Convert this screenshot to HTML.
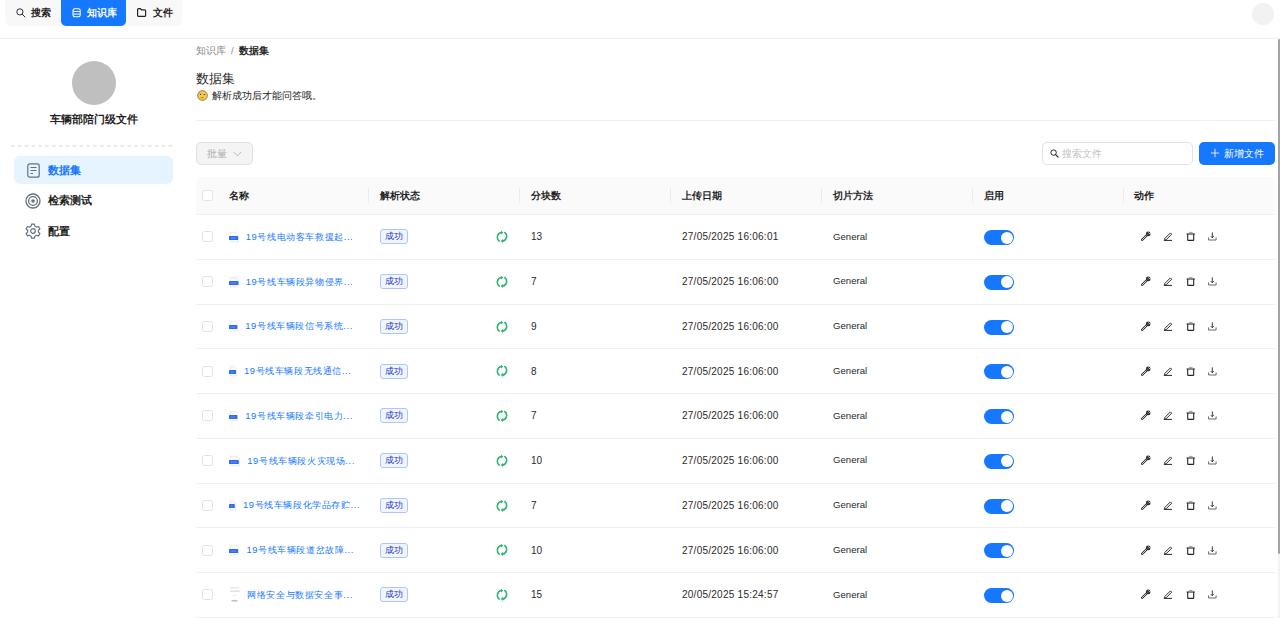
<!DOCTYPE html>
<html><head><meta charset="utf-8">
<style>
*{box-sizing:border-box;margin:0;padding:0}
html,body{width:1280px;height:618px;overflow:hidden;background:#fff;font-family:"Liberation Sans",sans-serif;color:#1f1f1f}
.abs{position:absolute}
.nav{left:5px;top:-6px;width:177px;height:32px;background:#f8f8f8;border-radius:6px}
.tab{top:-6px;height:32px;border-radius:5px;font-size:10px;font-weight:bold;line-height:12px}
.topline{left:0;top:38px;width:1280px;height:1px;background:#efefef}
.avatar-tr{left:1252px;top:3px;width:22px;height:22px;border-radius:50%;background:#f1f2f4}
.sb-avatar{left:72px;top:61px;width:44px;height:44px;border-radius:50%;background:#bfbfbf}
.sb-title{left:0;top:112px;width:187px;text-align:center;font-size:11px;font-weight:bold;line-height:14px}
.dash{left:11px;top:145px;width:162px;height:0;border-top:1px dashed #dcdcdc}
.menu-act{left:14px;top:156px;width:159px;height:28px;border-radius:6px;background:#e6f4ff}
.mi{left:48px;font-size:11px;font-weight:bold;line-height:14px}
.crumb{left:196px;top:45px;font-size:9.5px;line-height:12px}
.h1{left:196px;top:71.5px;font-size:12.5px;line-height:15px;color:#262626}
.sub{left:196px;top:89px;font-size:9.5px;line-height:12px;color:#262626}
.hline{left:196px;top:120px;width:1079px;height:1px;background:#f0f0f0}
.btn-batch{left:196px;top:142px;width:57px;height:23px;border:1px solid #e0e0e0;background:#f4f4f4;border-radius:5px;color:#adadad;font-size:9.5px;line-height:21px;padding-left:10px}
.search{left:1042px;top:142px;width:151px;height:23px;border:1px solid #e2e2e2;border-radius:5px;font-size:9.5px;line-height:21px;color:#bfbfbf;padding-left:19px}
.btn-add{left:1199px;top:142px;width:76px;height:23px;background:#1677ff;border-radius:5px;color:#fff;font-size:9.5px;line-height:23px;padding-left:25px}
.thead{left:196px;top:177px;width:1079px;height:38px;background:#fafafa;border-radius:6px 6px 0 0;border-bottom:1px solid #f0f0f0}
.th{top:189px;font-size:9.5px;font-weight:bold;line-height:13px}
.sep{top:188px;width:1px;height:15px;background:#ebebeb}
.row{left:196px;width:1079px;height:1px;background:#f0f0f0}
.cb{left:202px;width:11px;height:11px;border:1px solid #e2e2e2;border-radius:2.5px;background:#fff}
.name{left:245px;font-size:9.4px;letter-spacing:0.6px;line-height:12px;color:#1677ff}
.tag{left:380px;width:28px;height:15px;border:1px solid #adc6ff;background:#f0f5ff;border-radius:3px;color:#1d39c4;font-size:9px;line-height:13px;text-align:center}
.td{font-size:10px;line-height:12px;color:#2a2a2a}
.tg{left:984px;width:30px;height:15px;border-radius:8px;background:#1677ff}
.tg::after{content:"";position:absolute;right:1.5px;top:1.5px;width:12px;height:12px;border-radius:50%;background:#fff}
.scroll{left:1278px;top:39px;width:2px;height:515px;background:#a3a3a3;border-radius:1px}
.scrolltrack{left:1278px;top:39px;width:2px;height:579px;background:#f3f3f3}
</style></head>
<body>
<div class="abs nav"></div>
<div class="abs tab" style="left:61px;width:65px;background:#1677ff"></div>
<!-- nav items -->
<svg class="abs" style="left:16px;top:7.8px" width="10" height="10" viewBox="0 0 10 10"><circle cx="3.9" cy="3.9" r="3.1" fill="none" stroke="#262626" stroke-width="0.95"/><path d="M6.2 6.2L8.9 8.9" stroke="#262626" stroke-width="1" stroke-linecap="round"/></svg>
<div class="abs" style="left:31px;top:7px;font-size:9.5px;font-weight:bold;line-height:12px">搜索</div>
<svg class="abs" style="left:71.5px;top:7.5px" width="10" height="10" viewBox="0 0 10 10"><rect x="1" y="0.8" width="7.2" height="8" rx="1.8" fill="none" stroke="#fff" stroke-width="1.05"/><path d="M1 3.5H8.2M1 6.1H8.2" stroke="#fff" stroke-width="1"/></svg>
<div class="abs" style="left:87px;top:7px;font-size:9.5px;font-weight:bold;line-height:12px;color:#fff">知识库</div>
<svg class="abs" style="left:137px;top:7.5px" width="10" height="10" viewBox="0 0 10 10"><path d="M0.6 1.6Q0.6 0.6 1.6 0.6H3.4L4.4 1.8H7.6Q8.6 1.8 8.6 2.8V7.4Q8.6 8.4 7.6 8.4H1.6Q0.6 8.4 0.6 7.4Z" fill="none" stroke="#1f1f1f" stroke-width="1.15"/></svg>
<div class="abs" style="left:152.5px;top:7px;font-size:9.5px;font-weight:bold;line-height:12px">文件</div>
<div class="abs avatar-tr"></div>
<div class="abs topline"></div>

<!-- sidebar -->
<div class="abs sb-avatar"></div>
<div class="abs sb-title">车辆部陪门级文件</div>
<svg class="abs" style="left:11px;top:144px" width="163" height="4" viewBox="0 0 163 4"><line x1="0" y1="1.9" x2="163" y2="1.9" stroke="#dedede" stroke-width="1.3" stroke-dasharray="3.6 3.25"/></svg>
<div class="abs menu-act"></div>
<svg class="abs" style="left:26.7px;top:162.8px" width="13" height="15" viewBox="0 0 13 15"><rect x="0.8" y="0.8" width="11.4" height="13.4" rx="2" fill="none" stroke="#667085" stroke-width="1.2"/><path d="M3.5 4.5H9.5M3.5 7.5H9.5M3.5 10.5H6" stroke="#667085" stroke-width="1.2"/></svg>
<div class="abs mi" style="top:163px;color:#1677ff">数据集</div>
<svg class="abs" style="left:25px;top:193px" width="16" height="16" viewBox="0 0 16 16"><circle cx="8" cy="8" r="7" fill="none" stroke="#667085" stroke-width="1.3"/><circle cx="8" cy="8" r="4.4" fill="none" stroke="#667085" stroke-width="1.3"/><circle cx="8" cy="8" r="1.8" fill="#667085"/></svg>
<div class="abs mi" style="top:193px">检索测试</div>
<svg class="abs" style="left:25px;top:223px" width="16" height="16" viewBox="0 0 16 16"><path d="M6.6 1.2h2.8l.5 2 1.6.9 2-.6 1.4 2.4-1.5 1.4v1.8l1.5 1.4-1.4 2.4-2-.6-1.6.9-.5 2H6.6l-.5-2-1.6-.9-2 .6L1.1 10.5l1.5-1.4V7.3L1.1 5.9l1.4-2.4 2 .6 1.6-.9z" fill="none" stroke="#667085" stroke-width="1.2" stroke-linejoin="round"/><circle cx="8" cy="8" r="2.3" fill="none" stroke="#667085" stroke-width="1.2"/></svg>
<div class="abs mi" style="top:224px">配置</div>

<!-- main header -->
<div class="abs crumb"><span style="color:#8c8c8c">知识库</span><span style="color:#8c8c8c;margin:0 5px">/</span><span style="font-weight:bold;color:#262626">数据集</span></div>
<div class="abs h1">数据集</div>
<svg class="abs" style="left:197px;top:90px" width="11" height="11" viewBox="0 0 11 11"><circle cx="5.5" cy="5.5" r="4.9" fill="#f7c945" stroke="#5a4a2a" stroke-width="0.6"/><rect x="2.8" y="3.8" width="1.4" height="1.2" fill="#5a4020"/><rect x="6.6" y="4" width="1.6" height="0.9" fill="#5a4020"/><path d="M3.6 7.6H7" stroke="#a0782a" stroke-width="0.7"/></svg>
<div class="abs sub" style="left:212px;top:90px">解析成功后才能问答哦。</div>
<div class="abs hline"></div>

<div class="abs btn-batch">批量</div>
<svg class="abs" style="left:232.5px;top:150.5px" width="9" height="6" viewBox="0 0 9 6"><path d="M0.5 0.8L4.4 4.8L8.3 0.8" fill="none" stroke="#b0b0b0" stroke-width="0.9"/></svg>
<div class="abs search">搜索文件</div>
<svg class="abs" style="left:1050px;top:149px" width="9" height="9" viewBox="0 0 10 10"><circle cx="4" cy="4" r="3" fill="none" stroke="#262626" stroke-width="1.1"/><path d="M6.2 6.2L9 9" stroke="#262626" stroke-width="1.3" stroke-linecap="round"/></svg>
<div class="abs btn-add">新增文件</div>
<svg class="abs" style="left:1210px;top:148px" width="10" height="10" viewBox="0 0 10 10"><path d="M5 0.8V9.2M0.8 5H9.2" stroke="#fff" stroke-width="0.85"/></svg>

<!-- table header -->
<div class="abs thead"></div>
<div class="abs cb" style="top:190px"></div>
<div class="abs th" style="left:229px">名称</div>
<div class="abs sep" style="left:368px"></div>
<div class="abs th" style="left:380px">解析状态</div>
<div class="abs sep" style="left:519px"></div>
<div class="abs th" style="left:531px">分块数</div>
<div class="abs sep" style="left:670px"></div>
<div class="abs th" style="left:682px">上传日期</div>
<div class="abs sep" style="left:821px"></div>
<div class="abs th" style="left:833px">切片方法</div>
<div class="abs sep" style="left:972px"></div>
<div class="abs th" style="left:984px">启用</div>
<div class="abs sep" style="left:1123px"></div>
<div class="abs th" style="left:1134px">动作</div>

<!--ROWS-->
<div class="abs row" style="top:258.85px"></div>
<div class="abs cb" style="top:231.47px"></div>
<svg class="abs" style="left:229px;top:231.97px" width="10.0" height="11" viewBox="0 0 10.0 11"><path d="M1.3 0.4H7.6L9.7 2.5V9.9H1.3Z" fill="#fbfbfb" stroke="#dedede" stroke-width="0.6"/><rect x="0" y="4" width="9.1" height="4.1" rx="0.7" fill="#2d6cf0"/><path d="M1.5 6.1H7.0" stroke="#9db8f5" stroke-width="0.5"/></svg>
<div class="abs name" style="left:245.7px;top:230.97px">19号线电动客车救援起...</div>
<div class="abs tag" style="top:229.38px">成功</div>
<svg class="abs" style="left:496px;top:230.07px" width="12" height="13.6" viewBox="0 0 12 13" preserveAspectRatio="none"><path d="M3.2 10.6A4.6 4.6 0 0 1 5.2 2.4" fill="none" stroke="#2bb673" stroke-width="1.6" stroke-linecap="round"/><path d="M5 0.6L7.3 2.5L5 4.4Z" fill="#2bb673"/><path d="M8.8 2.4A4.6 4.6 0 0 1 6.8 10.6" fill="none" stroke="#2bb673" stroke-width="1.6" stroke-linecap="round"/><path d="M7 8.6L4.7 10.5L7 12.4Z" fill="#2bb673"/></svg>
<div class="abs td" style="left:531px;top:231.38px">13</div>
<div class="abs td" style="left:682px;top:231.38px;letter-spacing:0.25px">27/05/2025 16:06:01</div>
<div class="abs td" style="left:833px;top:230.67px;font-size:9.6px">General</div>
<div class="abs tg" style="top:230.07px"></div>
<svg class="abs" style="left:1141.0px;top:231.47px" width="10" height="10" viewBox="0 0 10 10"><path d="M1.2 8.8L5.8 4.2" stroke="#262626" stroke-width="2.3" stroke-linecap="round"/><path d="M1.3 8.7L5.6 4.4" stroke="#fff" stroke-width="0.8" stroke-linecap="round"/><circle cx="7.2" cy="2.9" r="2.3" fill="#262626"/><path d="M7.4 1.4L8.9 2.9" stroke="#fff" stroke-width="0.8"/><circle cx="7" cy="3.1" r="0.6" fill="#bbb"/></svg>
<svg class="abs" style="left:1163.0px;top:231.47px" width="10" height="10" viewBox="0 0 10 10"><path d="M1.7 7.6L7.4 1.9L8.7 3.2L3 8.9H1.7Z" fill="none" stroke="#262626" stroke-width="0.95" stroke-linejoin="round"/><path d="M0.8 9.4H9" stroke="#262626" stroke-width="1"/></svg>
<svg class="abs" style="left:1185.5px;top:231.47px" width="10" height="10" viewBox="0 0 10 10"><path d="M0.6 3H8.8" stroke="#262626" stroke-width="1.1"/><path d="M3.2 2.7V1.4H6.2V2.7" fill="none" stroke="#9a9a9a" stroke-width="0.9"/><path d="M1.7 3.1V8.9Q1.7 9.4 2.2 9.4H7.2Q7.7 9.4 7.7 8.9V3.1" fill="none" stroke="#262626" stroke-width="1.1"/></svg>
<svg class="abs" style="left:1207.5px;top:231.47px" width="10" height="10" viewBox="0 0 10 10"><path d="M4.3 1.4V6.6" stroke="#262626" stroke-width="0.9"/><path d="M2.8 5.2L4.3 6.7L5.8 5.2" fill="none" stroke="#262626" stroke-width="0.9"/><path d="M0.6 6.4V9H8.1V6.4" fill="none" stroke="#5a5a5a" stroke-width="0.9"/></svg>
<div class="abs row" style="top:303.60px"></div>
<div class="abs cb" style="top:276.23px"></div>
<svg class="abs" style="left:229px;top:276.73px" width="10.4" height="11" viewBox="0 0 10.4 11"><path d="M1.3 0.4H8.0L10.1 2.5V9.9H1.3Z" fill="#fbfbfb" stroke="#dedede" stroke-width="0.6"/><rect x="0" y="4" width="9.5" height="4.1" rx="0.7" fill="#2d6cf0"/><path d="M1.5 6.1H7.4" stroke="#9db8f5" stroke-width="0.5"/></svg>
<div class="abs name" style="left:245.7px;top:275.73px">19号线车辆段异物侵界...</div>
<div class="abs tag" style="top:274.12px">成功</div>
<svg class="abs" style="left:496px;top:274.83px" width="12" height="13.6" viewBox="0 0 12 13" preserveAspectRatio="none"><path d="M3.2 10.6A4.6 4.6 0 0 1 5.2 2.4" fill="none" stroke="#2bb673" stroke-width="1.6" stroke-linecap="round"/><path d="M5 0.6L7.3 2.5L5 4.4Z" fill="#2bb673"/><path d="M8.8 2.4A4.6 4.6 0 0 1 6.8 10.6" fill="none" stroke="#2bb673" stroke-width="1.6" stroke-linecap="round"/><path d="M7 8.6L4.7 10.5L7 12.4Z" fill="#2bb673"/></svg>
<div class="abs td" style="left:531px;top:276.12px">7</div>
<div class="abs td" style="left:682px;top:276.12px;letter-spacing:0.25px">27/05/2025 16:06:00</div>
<div class="abs td" style="left:833px;top:275.43px;font-size:9.6px">General</div>
<div class="abs tg" style="top:274.83px"></div>
<svg class="abs" style="left:1141.0px;top:276.23px" width="10" height="10" viewBox="0 0 10 10"><path d="M1.2 8.8L5.8 4.2" stroke="#262626" stroke-width="2.3" stroke-linecap="round"/><path d="M1.3 8.7L5.6 4.4" stroke="#fff" stroke-width="0.8" stroke-linecap="round"/><circle cx="7.2" cy="2.9" r="2.3" fill="#262626"/><path d="M7.4 1.4L8.9 2.9" stroke="#fff" stroke-width="0.8"/><circle cx="7" cy="3.1" r="0.6" fill="#bbb"/></svg>
<svg class="abs" style="left:1163.0px;top:276.23px" width="10" height="10" viewBox="0 0 10 10"><path d="M1.7 7.6L7.4 1.9L8.7 3.2L3 8.9H1.7Z" fill="none" stroke="#262626" stroke-width="0.95" stroke-linejoin="round"/><path d="M0.8 9.4H9" stroke="#262626" stroke-width="1"/></svg>
<svg class="abs" style="left:1185.5px;top:276.23px" width="10" height="10" viewBox="0 0 10 10"><path d="M0.6 3H8.8" stroke="#262626" stroke-width="1.1"/><path d="M3.2 2.7V1.4H6.2V2.7" fill="none" stroke="#9a9a9a" stroke-width="0.9"/><path d="M1.7 3.1V8.9Q1.7 9.4 2.2 9.4H7.2Q7.7 9.4 7.7 8.9V3.1" fill="none" stroke="#262626" stroke-width="1.1"/></svg>
<svg class="abs" style="left:1207.5px;top:276.23px" width="10" height="10" viewBox="0 0 10 10"><path d="M4.3 1.4V6.6" stroke="#262626" stroke-width="0.9"/><path d="M2.8 5.2L4.3 6.7L5.8 5.2" fill="none" stroke="#262626" stroke-width="0.9"/><path d="M0.6 6.4V9H8.1V6.4" fill="none" stroke="#5a5a5a" stroke-width="0.9"/></svg>
<div class="abs row" style="top:348.35px"></div>
<div class="abs cb" style="top:320.98px"></div>
<svg class="abs" style="left:229px;top:321.48px" width="9.3" height="11" viewBox="0 0 9.3 11"><path d="M1.3 0.4H6.9L9.0 2.5V9.9H1.3Z" fill="#fbfbfb" stroke="#dedede" stroke-width="0.6"/><rect x="0" y="4" width="8.4" height="4.1" rx="0.7" fill="#2d6cf0"/><path d="M1.5 6.1H6.3" stroke="#9db8f5" stroke-width="0.5"/></svg>
<div class="abs name" style="left:245.3px;top:320.48px">19号线车辆段信号系统...</div>
<div class="abs tag" style="top:318.88px">成功</div>
<svg class="abs" style="left:496px;top:319.58px" width="12" height="13.6" viewBox="0 0 12 13" preserveAspectRatio="none"><path d="M3.2 10.6A4.6 4.6 0 0 1 5.2 2.4" fill="none" stroke="#2bb673" stroke-width="1.6" stroke-linecap="round"/><path d="M5 0.6L7.3 2.5L5 4.4Z" fill="#2bb673"/><path d="M8.8 2.4A4.6 4.6 0 0 1 6.8 10.6" fill="none" stroke="#2bb673" stroke-width="1.6" stroke-linecap="round"/><path d="M7 8.6L4.7 10.5L7 12.4Z" fill="#2bb673"/></svg>
<div class="abs td" style="left:531px;top:320.88px">9</div>
<div class="abs td" style="left:682px;top:320.88px;letter-spacing:0.25px">27/05/2025 16:06:00</div>
<div class="abs td" style="left:833px;top:320.18px;font-size:9.6px">General</div>
<div class="abs tg" style="top:319.58px"></div>
<svg class="abs" style="left:1141.0px;top:320.98px" width="10" height="10" viewBox="0 0 10 10"><path d="M1.2 8.8L5.8 4.2" stroke="#262626" stroke-width="2.3" stroke-linecap="round"/><path d="M1.3 8.7L5.6 4.4" stroke="#fff" stroke-width="0.8" stroke-linecap="round"/><circle cx="7.2" cy="2.9" r="2.3" fill="#262626"/><path d="M7.4 1.4L8.9 2.9" stroke="#fff" stroke-width="0.8"/><circle cx="7" cy="3.1" r="0.6" fill="#bbb"/></svg>
<svg class="abs" style="left:1163.0px;top:320.98px" width="10" height="10" viewBox="0 0 10 10"><path d="M1.7 7.6L7.4 1.9L8.7 3.2L3 8.9H1.7Z" fill="none" stroke="#262626" stroke-width="0.95" stroke-linejoin="round"/><path d="M0.8 9.4H9" stroke="#262626" stroke-width="1"/></svg>
<svg class="abs" style="left:1185.5px;top:320.98px" width="10" height="10" viewBox="0 0 10 10"><path d="M0.6 3H8.8" stroke="#262626" stroke-width="1.1"/><path d="M3.2 2.7V1.4H6.2V2.7" fill="none" stroke="#9a9a9a" stroke-width="0.9"/><path d="M1.7 3.1V8.9Q1.7 9.4 2.2 9.4H7.2Q7.7 9.4 7.7 8.9V3.1" fill="none" stroke="#262626" stroke-width="1.1"/></svg>
<svg class="abs" style="left:1207.5px;top:320.98px" width="10" height="10" viewBox="0 0 10 10"><path d="M4.3 1.4V6.6" stroke="#262626" stroke-width="0.9"/><path d="M2.8 5.2L4.3 6.7L5.8 5.2" fill="none" stroke="#262626" stroke-width="0.9"/><path d="M0.6 6.4V9H8.1V6.4" fill="none" stroke="#5a5a5a" stroke-width="0.9"/></svg>
<div class="abs row" style="top:393.10px"></div>
<div class="abs cb" style="top:365.73px"></div>
<svg class="abs" style="left:229px;top:366.23px" width="7.9" height="11" viewBox="0 0 7.9 11"><path d="M1.3 0.4H5.5L7.6 2.5V9.9H1.3Z" fill="#fbfbfb" stroke="#dedede" stroke-width="0.6"/><rect x="0" y="4" width="7.0" height="4.1" rx="0.7" fill="#2d6cf0"/><path d="M1.5 6.1H4.9" stroke="#9db8f5" stroke-width="0.5"/></svg>
<div class="abs name" style="left:243.9px;top:365.23px">19号线车辆段无线通信...</div>
<div class="abs tag" style="top:363.62px">成功</div>
<svg class="abs" style="left:496px;top:364.33px" width="12" height="13.6" viewBox="0 0 12 13" preserveAspectRatio="none"><path d="M3.2 10.6A4.6 4.6 0 0 1 5.2 2.4" fill="none" stroke="#2bb673" stroke-width="1.6" stroke-linecap="round"/><path d="M5 0.6L7.3 2.5L5 4.4Z" fill="#2bb673"/><path d="M8.8 2.4A4.6 4.6 0 0 1 6.8 10.6" fill="none" stroke="#2bb673" stroke-width="1.6" stroke-linecap="round"/><path d="M7 8.6L4.7 10.5L7 12.4Z" fill="#2bb673"/></svg>
<div class="abs td" style="left:531px;top:365.62px">8</div>
<div class="abs td" style="left:682px;top:365.62px;letter-spacing:0.25px">27/05/2025 16:06:00</div>
<div class="abs td" style="left:833px;top:364.93px;font-size:9.6px">General</div>
<div class="abs tg" style="top:364.33px"></div>
<svg class="abs" style="left:1141.0px;top:365.73px" width="10" height="10" viewBox="0 0 10 10"><path d="M1.2 8.8L5.8 4.2" stroke="#262626" stroke-width="2.3" stroke-linecap="round"/><path d="M1.3 8.7L5.6 4.4" stroke="#fff" stroke-width="0.8" stroke-linecap="round"/><circle cx="7.2" cy="2.9" r="2.3" fill="#262626"/><path d="M7.4 1.4L8.9 2.9" stroke="#fff" stroke-width="0.8"/><circle cx="7" cy="3.1" r="0.6" fill="#bbb"/></svg>
<svg class="abs" style="left:1163.0px;top:365.73px" width="10" height="10" viewBox="0 0 10 10"><path d="M1.7 7.6L7.4 1.9L8.7 3.2L3 8.9H1.7Z" fill="none" stroke="#262626" stroke-width="0.95" stroke-linejoin="round"/><path d="M0.8 9.4H9" stroke="#262626" stroke-width="1"/></svg>
<svg class="abs" style="left:1185.5px;top:365.73px" width="10" height="10" viewBox="0 0 10 10"><path d="M0.6 3H8.8" stroke="#262626" stroke-width="1.1"/><path d="M3.2 2.7V1.4H6.2V2.7" fill="none" stroke="#9a9a9a" stroke-width="0.9"/><path d="M1.7 3.1V8.9Q1.7 9.4 2.2 9.4H7.2Q7.7 9.4 7.7 8.9V3.1" fill="none" stroke="#262626" stroke-width="1.1"/></svg>
<svg class="abs" style="left:1207.5px;top:365.73px" width="10" height="10" viewBox="0 0 10 10"><path d="M4.3 1.4V6.6" stroke="#262626" stroke-width="0.9"/><path d="M2.8 5.2L4.3 6.7L5.8 5.2" fill="none" stroke="#262626" stroke-width="0.9"/><path d="M0.6 6.4V9H8.1V6.4" fill="none" stroke="#5a5a5a" stroke-width="0.9"/></svg>
<div class="abs row" style="top:437.85px"></div>
<div class="abs cb" style="top:410.48px"></div>
<svg class="abs" style="left:229px;top:410.98px" width="9.3" height="11" viewBox="0 0 9.3 11"><path d="M1.3 0.4H6.9L9.0 2.5V9.9H1.3Z" fill="#fbfbfb" stroke="#dedede" stroke-width="0.6"/><rect x="0" y="4" width="8.4" height="4.1" rx="0.7" fill="#2d6cf0"/><path d="M1.5 6.1H6.3" stroke="#9db8f5" stroke-width="0.5"/></svg>
<div class="abs name" style="left:245.3px;top:409.98px">19号线车辆段牵引电力...</div>
<div class="abs tag" style="top:408.38px">成功</div>
<svg class="abs" style="left:496px;top:409.08px" width="12" height="13.6" viewBox="0 0 12 13" preserveAspectRatio="none"><path d="M3.2 10.6A4.6 4.6 0 0 1 5.2 2.4" fill="none" stroke="#2bb673" stroke-width="1.6" stroke-linecap="round"/><path d="M5 0.6L7.3 2.5L5 4.4Z" fill="#2bb673"/><path d="M8.8 2.4A4.6 4.6 0 0 1 6.8 10.6" fill="none" stroke="#2bb673" stroke-width="1.6" stroke-linecap="round"/><path d="M7 8.6L4.7 10.5L7 12.4Z" fill="#2bb673"/></svg>
<div class="abs td" style="left:531px;top:410.38px">7</div>
<div class="abs td" style="left:682px;top:410.38px;letter-spacing:0.25px">27/05/2025 16:06:00</div>
<div class="abs td" style="left:833px;top:409.68px;font-size:9.6px">General</div>
<div class="abs tg" style="top:409.08px"></div>
<svg class="abs" style="left:1141.0px;top:410.48px" width="10" height="10" viewBox="0 0 10 10"><path d="M1.2 8.8L5.8 4.2" stroke="#262626" stroke-width="2.3" stroke-linecap="round"/><path d="M1.3 8.7L5.6 4.4" stroke="#fff" stroke-width="0.8" stroke-linecap="round"/><circle cx="7.2" cy="2.9" r="2.3" fill="#262626"/><path d="M7.4 1.4L8.9 2.9" stroke="#fff" stroke-width="0.8"/><circle cx="7" cy="3.1" r="0.6" fill="#bbb"/></svg>
<svg class="abs" style="left:1163.0px;top:410.48px" width="10" height="10" viewBox="0 0 10 10"><path d="M1.7 7.6L7.4 1.9L8.7 3.2L3 8.9H1.7Z" fill="none" stroke="#262626" stroke-width="0.95" stroke-linejoin="round"/><path d="M0.8 9.4H9" stroke="#262626" stroke-width="1"/></svg>
<svg class="abs" style="left:1185.5px;top:410.48px" width="10" height="10" viewBox="0 0 10 10"><path d="M0.6 3H8.8" stroke="#262626" stroke-width="1.1"/><path d="M3.2 2.7V1.4H6.2V2.7" fill="none" stroke="#9a9a9a" stroke-width="0.9"/><path d="M1.7 3.1V8.9Q1.7 9.4 2.2 9.4H7.2Q7.7 9.4 7.7 8.9V3.1" fill="none" stroke="#262626" stroke-width="1.1"/></svg>
<svg class="abs" style="left:1207.5px;top:410.48px" width="10" height="10" viewBox="0 0 10 10"><path d="M4.3 1.4V6.6" stroke="#262626" stroke-width="0.9"/><path d="M2.8 5.2L4.3 6.7L5.8 5.2" fill="none" stroke="#262626" stroke-width="0.9"/><path d="M0.6 6.4V9H8.1V6.4" fill="none" stroke="#5a5a5a" stroke-width="0.9"/></svg>
<div class="abs row" style="top:482.60px"></div>
<div class="abs cb" style="top:455.23px"></div>
<svg class="abs" style="left:229px;top:455.73px" width="10.7" height="11" viewBox="0 0 10.7 11"><path d="M1.3 0.4H8.3L10.4 2.5V9.9H1.3Z" fill="#fbfbfb" stroke="#dedede" stroke-width="0.6"/><rect x="0" y="4" width="9.8" height="4.1" rx="0.7" fill="#2d6cf0"/><path d="M1.5 6.1H7.7" stroke="#9db8f5" stroke-width="0.5"/></svg>
<div class="abs name" style="left:247.3px;top:454.73px">19号线车辆段火灾现场...</div>
<div class="abs tag" style="top:453.12px">成功</div>
<svg class="abs" style="left:496px;top:453.83px" width="12" height="13.6" viewBox="0 0 12 13" preserveAspectRatio="none"><path d="M3.2 10.6A4.6 4.6 0 0 1 5.2 2.4" fill="none" stroke="#2bb673" stroke-width="1.6" stroke-linecap="round"/><path d="M5 0.6L7.3 2.5L5 4.4Z" fill="#2bb673"/><path d="M8.8 2.4A4.6 4.6 0 0 1 6.8 10.6" fill="none" stroke="#2bb673" stroke-width="1.6" stroke-linecap="round"/><path d="M7 8.6L4.7 10.5L7 12.4Z" fill="#2bb673"/></svg>
<div class="abs td" style="left:531px;top:455.12px">10</div>
<div class="abs td" style="left:682px;top:455.12px;letter-spacing:0.25px">27/05/2025 16:06:00</div>
<div class="abs td" style="left:833px;top:454.43px;font-size:9.6px">General</div>
<div class="abs tg" style="top:453.83px"></div>
<svg class="abs" style="left:1141.0px;top:455.23px" width="10" height="10" viewBox="0 0 10 10"><path d="M1.2 8.8L5.8 4.2" stroke="#262626" stroke-width="2.3" stroke-linecap="round"/><path d="M1.3 8.7L5.6 4.4" stroke="#fff" stroke-width="0.8" stroke-linecap="round"/><circle cx="7.2" cy="2.9" r="2.3" fill="#262626"/><path d="M7.4 1.4L8.9 2.9" stroke="#fff" stroke-width="0.8"/><circle cx="7" cy="3.1" r="0.6" fill="#bbb"/></svg>
<svg class="abs" style="left:1163.0px;top:455.23px" width="10" height="10" viewBox="0 0 10 10"><path d="M1.7 7.6L7.4 1.9L8.7 3.2L3 8.9H1.7Z" fill="none" stroke="#262626" stroke-width="0.95" stroke-linejoin="round"/><path d="M0.8 9.4H9" stroke="#262626" stroke-width="1"/></svg>
<svg class="abs" style="left:1185.5px;top:455.23px" width="10" height="10" viewBox="0 0 10 10"><path d="M0.6 3H8.8" stroke="#262626" stroke-width="1.1"/><path d="M3.2 2.7V1.4H6.2V2.7" fill="none" stroke="#9a9a9a" stroke-width="0.9"/><path d="M1.7 3.1V8.9Q1.7 9.4 2.2 9.4H7.2Q7.7 9.4 7.7 8.9V3.1" fill="none" stroke="#262626" stroke-width="1.1"/></svg>
<svg class="abs" style="left:1207.5px;top:455.23px" width="10" height="10" viewBox="0 0 10 10"><path d="M4.3 1.4V6.6" stroke="#262626" stroke-width="0.9"/><path d="M2.8 5.2L4.3 6.7L5.8 5.2" fill="none" stroke="#262626" stroke-width="0.9"/><path d="M0.6 6.4V9H8.1V6.4" fill="none" stroke="#5a5a5a" stroke-width="0.9"/></svg>
<div class="abs row" style="top:527.35px"></div>
<div class="abs cb" style="top:499.98px"></div>
<svg class="abs" style="left:229px;top:500.48px" width="6.7" height="11" viewBox="0 0 6.7 11"><path d="M1.3 0.4H4.3L6.4 2.5V9.9H1.3Z" fill="#fbfbfb" stroke="#dedede" stroke-width="0.6"/><rect x="0" y="4" width="5.8" height="4.1" rx="0.7" fill="#2d6cf0"/><path d="M1.5 6.1H3.7" stroke="#9db8f5" stroke-width="0.5"/></svg>
<div class="abs name" style="left:242.9px;top:499.48px">19号线车辆段化学品存贮...</div>
<div class="abs tag" style="top:497.88px">成功</div>
<svg class="abs" style="left:496px;top:498.58px" width="12" height="13.6" viewBox="0 0 12 13" preserveAspectRatio="none"><path d="M3.2 10.6A4.6 4.6 0 0 1 5.2 2.4" fill="none" stroke="#2bb673" stroke-width="1.6" stroke-linecap="round"/><path d="M5 0.6L7.3 2.5L5 4.4Z" fill="#2bb673"/><path d="M8.8 2.4A4.6 4.6 0 0 1 6.8 10.6" fill="none" stroke="#2bb673" stroke-width="1.6" stroke-linecap="round"/><path d="M7 8.6L4.7 10.5L7 12.4Z" fill="#2bb673"/></svg>
<div class="abs td" style="left:531px;top:499.88px">7</div>
<div class="abs td" style="left:682px;top:499.88px;letter-spacing:0.25px">27/05/2025 16:06:00</div>
<div class="abs td" style="left:833px;top:499.18px;font-size:9.6px">General</div>
<div class="abs tg" style="top:498.58px"></div>
<svg class="abs" style="left:1141.0px;top:499.98px" width="10" height="10" viewBox="0 0 10 10"><path d="M1.2 8.8L5.8 4.2" stroke="#262626" stroke-width="2.3" stroke-linecap="round"/><path d="M1.3 8.7L5.6 4.4" stroke="#fff" stroke-width="0.8" stroke-linecap="round"/><circle cx="7.2" cy="2.9" r="2.3" fill="#262626"/><path d="M7.4 1.4L8.9 2.9" stroke="#fff" stroke-width="0.8"/><circle cx="7" cy="3.1" r="0.6" fill="#bbb"/></svg>
<svg class="abs" style="left:1163.0px;top:499.98px" width="10" height="10" viewBox="0 0 10 10"><path d="M1.7 7.6L7.4 1.9L8.7 3.2L3 8.9H1.7Z" fill="none" stroke="#262626" stroke-width="0.95" stroke-linejoin="round"/><path d="M0.8 9.4H9" stroke="#262626" stroke-width="1"/></svg>
<svg class="abs" style="left:1185.5px;top:499.98px" width="10" height="10" viewBox="0 0 10 10"><path d="M0.6 3H8.8" stroke="#262626" stroke-width="1.1"/><path d="M3.2 2.7V1.4H6.2V2.7" fill="none" stroke="#9a9a9a" stroke-width="0.9"/><path d="M1.7 3.1V8.9Q1.7 9.4 2.2 9.4H7.2Q7.7 9.4 7.7 8.9V3.1" fill="none" stroke="#262626" stroke-width="1.1"/></svg>
<svg class="abs" style="left:1207.5px;top:499.98px" width="10" height="10" viewBox="0 0 10 10"><path d="M4.3 1.4V6.6" stroke="#262626" stroke-width="0.9"/><path d="M2.8 5.2L4.3 6.7L5.8 5.2" fill="none" stroke="#262626" stroke-width="0.9"/><path d="M0.6 6.4V9H8.1V6.4" fill="none" stroke="#5a5a5a" stroke-width="0.9"/></svg>
<div class="abs row" style="top:572.10px"></div>
<div class="abs cb" style="top:544.73px"></div>
<svg class="abs" style="left:229px;top:545.23px" width="10.0" height="11" viewBox="0 0 10.0 11"><path d="M1.3 0.4H7.6L9.7 2.5V9.9H1.3Z" fill="#fbfbfb" stroke="#dedede" stroke-width="0.6"/><rect x="0" y="4" width="9.1" height="4.1" rx="0.7" fill="#2d6cf0"/><path d="M1.5 6.1H7.0" stroke="#9db8f5" stroke-width="0.5"/></svg>
<div class="abs name" style="left:246.4px;top:544.23px">19号线车辆段道岔故障...</div>
<div class="abs tag" style="top:542.62px">成功</div>
<svg class="abs" style="left:496px;top:543.33px" width="12" height="13.6" viewBox="0 0 12 13" preserveAspectRatio="none"><path d="M3.2 10.6A4.6 4.6 0 0 1 5.2 2.4" fill="none" stroke="#2bb673" stroke-width="1.6" stroke-linecap="round"/><path d="M5 0.6L7.3 2.5L5 4.4Z" fill="#2bb673"/><path d="M8.8 2.4A4.6 4.6 0 0 1 6.8 10.6" fill="none" stroke="#2bb673" stroke-width="1.6" stroke-linecap="round"/><path d="M7 8.6L4.7 10.5L7 12.4Z" fill="#2bb673"/></svg>
<div class="abs td" style="left:531px;top:544.62px">10</div>
<div class="abs td" style="left:682px;top:544.62px;letter-spacing:0.25px">27/05/2025 16:06:00</div>
<div class="abs td" style="left:833px;top:543.93px;font-size:9.6px">General</div>
<div class="abs tg" style="top:543.33px"></div>
<svg class="abs" style="left:1141.0px;top:544.73px" width="10" height="10" viewBox="0 0 10 10"><path d="M1.2 8.8L5.8 4.2" stroke="#262626" stroke-width="2.3" stroke-linecap="round"/><path d="M1.3 8.7L5.6 4.4" stroke="#fff" stroke-width="0.8" stroke-linecap="round"/><circle cx="7.2" cy="2.9" r="2.3" fill="#262626"/><path d="M7.4 1.4L8.9 2.9" stroke="#fff" stroke-width="0.8"/><circle cx="7" cy="3.1" r="0.6" fill="#bbb"/></svg>
<svg class="abs" style="left:1163.0px;top:544.73px" width="10" height="10" viewBox="0 0 10 10"><path d="M1.7 7.6L7.4 1.9L8.7 3.2L3 8.9H1.7Z" fill="none" stroke="#262626" stroke-width="0.95" stroke-linejoin="round"/><path d="M0.8 9.4H9" stroke="#262626" stroke-width="1"/></svg>
<svg class="abs" style="left:1185.5px;top:544.73px" width="10" height="10" viewBox="0 0 10 10"><path d="M0.6 3H8.8" stroke="#262626" stroke-width="1.1"/><path d="M3.2 2.7V1.4H6.2V2.7" fill="none" stroke="#9a9a9a" stroke-width="0.9"/><path d="M1.7 3.1V8.9Q1.7 9.4 2.2 9.4H7.2Q7.7 9.4 7.7 8.9V3.1" fill="none" stroke="#262626" stroke-width="1.1"/></svg>
<svg class="abs" style="left:1207.5px;top:544.73px" width="10" height="10" viewBox="0 0 10 10"><path d="M4.3 1.4V6.6" stroke="#262626" stroke-width="0.9"/><path d="M2.8 5.2L4.3 6.7L5.8 5.2" fill="none" stroke="#262626" stroke-width="0.9"/><path d="M0.6 6.4V9H8.1V6.4" fill="none" stroke="#5a5a5a" stroke-width="0.9"/></svg>
<div class="abs row" style="top:616.85px"></div>
<div class="abs cb" style="top:589.48px"></div>
<svg class="abs" style="left:229px;top:587.48px" width="12" height="15" viewBox="0 0 12 15"><path d="M1.2 0.8H6.5" stroke="#c8cbe0" stroke-width="0.7"/><path d="M6.5 0.8H10.5" stroke="#cfcfcf" stroke-width="0.6"/><path d="M1.2 4.2H10.6" stroke="#bdbdbd" stroke-width="0.7"/><path d="M3.8 8.5H4.4M5.7 8.5H7" stroke="#cfcfcf" stroke-width="0.8"/><path d="M2.5 13.9H8.5" stroke="#8a8a8a" stroke-width="0.8"/><path d="M4.5 13.3H7" stroke="#b0b0b0" stroke-width="0.6"/></svg>
<div class="abs name" style="left:247.3px;top:588.98px">网络安全与数据安全事...</div>
<div class="abs tag" style="top:587.38px">成功</div>
<svg class="abs" style="left:496px;top:588.08px" width="12" height="13.6" viewBox="0 0 12 13" preserveAspectRatio="none"><path d="M3.2 10.6A4.6 4.6 0 0 1 5.2 2.4" fill="none" stroke="#2bb673" stroke-width="1.6" stroke-linecap="round"/><path d="M5 0.6L7.3 2.5L5 4.4Z" fill="#2bb673"/><path d="M8.8 2.4A4.6 4.6 0 0 1 6.8 10.6" fill="none" stroke="#2bb673" stroke-width="1.6" stroke-linecap="round"/><path d="M7 8.6L4.7 10.5L7 12.4Z" fill="#2bb673"/></svg>
<div class="abs td" style="left:531px;top:589.38px">15</div>
<div class="abs td" style="left:682px;top:589.38px;letter-spacing:0.25px">20/05/2025 15:24:57</div>
<div class="abs td" style="left:833px;top:588.68px;font-size:9.6px">General</div>
<div class="abs tg" style="top:588.08px"></div>
<svg class="abs" style="left:1141.0px;top:589.48px" width="10" height="10" viewBox="0 0 10 10"><path d="M1.2 8.8L5.8 4.2" stroke="#262626" stroke-width="2.3" stroke-linecap="round"/><path d="M1.3 8.7L5.6 4.4" stroke="#fff" stroke-width="0.8" stroke-linecap="round"/><circle cx="7.2" cy="2.9" r="2.3" fill="#262626"/><path d="M7.4 1.4L8.9 2.9" stroke="#fff" stroke-width="0.8"/><circle cx="7" cy="3.1" r="0.6" fill="#bbb"/></svg>
<svg class="abs" style="left:1163.0px;top:589.48px" width="10" height="10" viewBox="0 0 10 10"><path d="M1.7 7.6L7.4 1.9L8.7 3.2L3 8.9H1.7Z" fill="none" stroke="#262626" stroke-width="0.95" stroke-linejoin="round"/><path d="M0.8 9.4H9" stroke="#262626" stroke-width="1"/></svg>
<svg class="abs" style="left:1185.5px;top:589.48px" width="10" height="10" viewBox="0 0 10 10"><path d="M0.6 3H8.8" stroke="#262626" stroke-width="1.1"/><path d="M3.2 2.7V1.4H6.2V2.7" fill="none" stroke="#9a9a9a" stroke-width="0.9"/><path d="M1.7 3.1V8.9Q1.7 9.4 2.2 9.4H7.2Q7.7 9.4 7.7 8.9V3.1" fill="none" stroke="#262626" stroke-width="1.1"/></svg>
<svg class="abs" style="left:1207.5px;top:589.48px" width="10" height="10" viewBox="0 0 10 10"><path d="M4.3 1.4V6.6" stroke="#262626" stroke-width="0.9"/><path d="M2.8 5.2L4.3 6.7L5.8 5.2" fill="none" stroke="#262626" stroke-width="0.9"/><path d="M0.6 6.4V9H8.1V6.4" fill="none" stroke="#5a5a5a" stroke-width="0.9"/></svg>
<!--/ROWS-->

<div class="abs scrolltrack"></div>
<div class="abs scroll"></div>
</body></html>
